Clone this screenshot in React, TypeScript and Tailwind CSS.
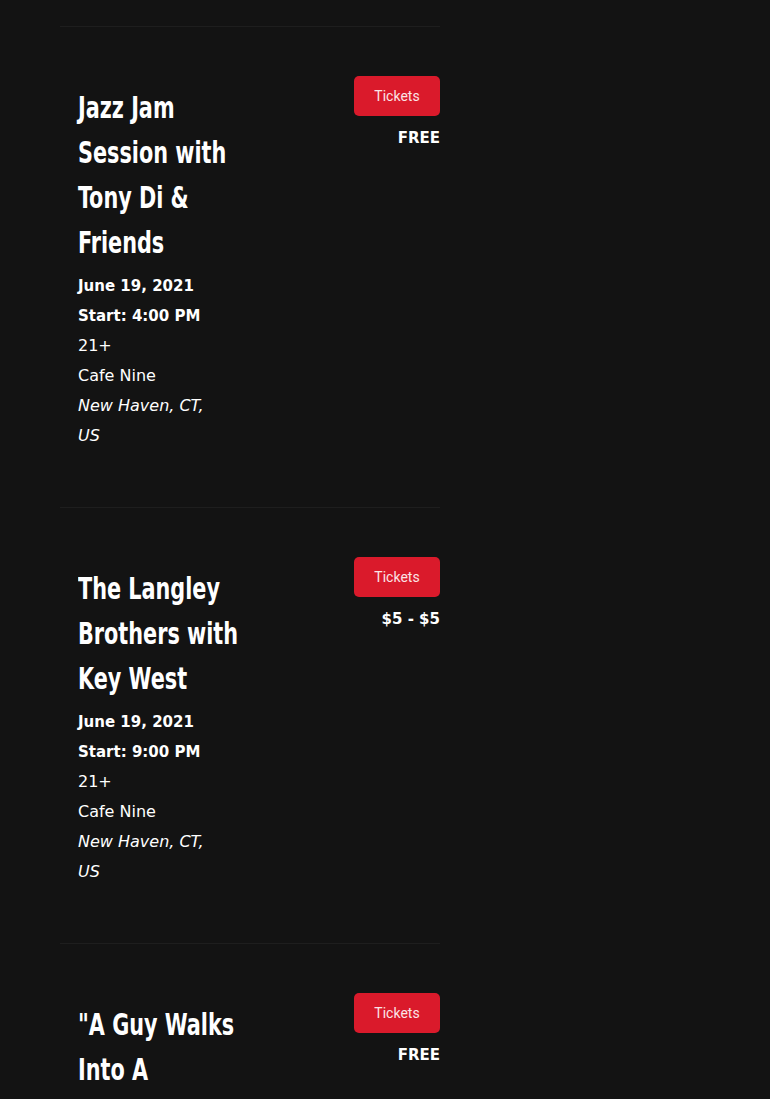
import type { ReactNode } from 'react'

interface EventItem {
  readonly title: ReactNode
  readonly date: string
  readonly start: string
  readonly age: string
  readonly venue: string
  readonly city: string
  readonly price: string
}

const events: EventItem[] = [
  {
    title: 'Jazz Jam Session with Tony Di & Friends',
    date: 'June 19, 2021',
    start: 'Start: 4:00 PM',
    age: '21+',
    venue: 'Cafe Nine',
    city: 'New Haven, CT, US',
    price: 'FREE',
  },
  {
    title: 'The Langley Brothers with Key West',
    date: 'June 19, 2021',
    start: 'Start: 9:00 PM',
    age: '21+',
    venue: 'Cafe Nine',
    city: 'New Haven, CT, US',
    price: '$5 - $5',
  },
  {
    title: '"A Guy Walks Into A Bookstore"',
    date: 'June 20, 2021',
    start: 'Start: 7:00 PM',
    age: '21+',
    venue: 'Cafe Nine',
    city: 'New Haven, CT, US',
    price: 'FREE',
  },
]

// no Oswald offline: condensed DejaVu, squeezed horizontally
const headingFont = "font-['DejaVu_Sans_Condensed','DejaVu_Sans',sans-serif]"
const bodyFont = "font-['DejaVu_Sans','Noto_Sans',sans-serif]"

function EventCard({ event }: { readonly event: EventItem }) {
  return (
    <div className="border-t border-[#1e1e1e] pt-[49px] pb-[56px] pl-[18px] flex justify-between">
      <div className="w-[160px] pt-[9px]">
        <h2
          className={`${headingFont} w-[230px] origin-left scale-x-[0.745] text-[31px] leading-[45px] font-bold text-white`}
        >
          {event.title}
        </h2>
        <div className={`${bodyFont} w-[150px] mt-[6px] text-white`}>
          <p className="text-[15px] leading-[30px] font-bold">{event.date}</p>
          <p className="text-[15px] leading-[30px] font-bold">{event.start}</p>
          <p className="text-[16px] leading-[30px]">{event.age}</p>
          <p className="text-[16px] leading-[30px]">{event.venue}</p>
          <p className="text-[16px] leading-[30px] italic">{event.city}</p>
        </div>
      </div>
      <div className="flex flex-col items-end">
        <button
          type="button"
          className="w-[86px] h-[40px] rounded-[5px] bg-[#da1a2b] text-[14px] text-[#fbe4e6] font-['Roboto',sans-serif]"
        >
          Tickets
        </button>
        <span className={`${bodyFont} mt-[10px] text-[15px] leading-[24px] font-bold text-white`}>
          {event.price}
        </span>
      </div>
    </div>
  )
}

export default function App() {
  return (
    <div className="min-h-screen bg-[#131313] pt-[26px]">
      <div className="ml-[60px] w-[380px]">
        {events.map((event, i) => (
          <EventCard key={i} event={event} />
        ))}
      </div>
    </div>
  )
}
